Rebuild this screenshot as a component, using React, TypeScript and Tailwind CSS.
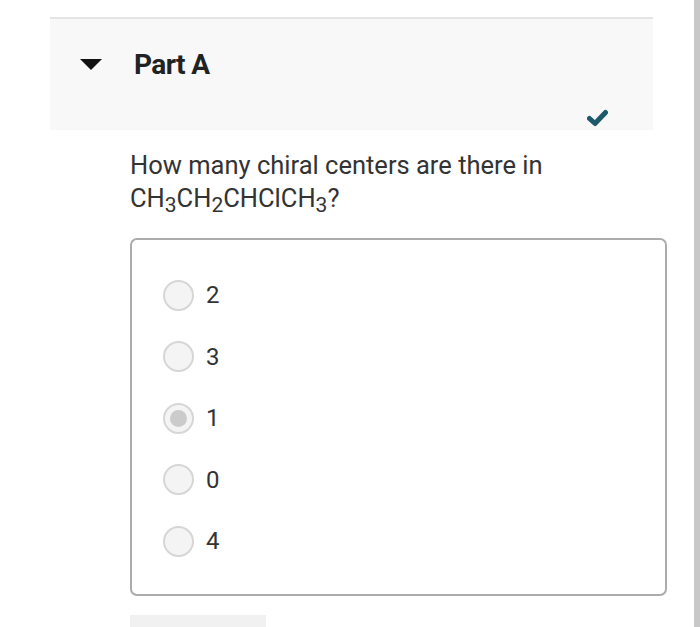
import React from "react";

const options = ["2", "3", "1", "0", "4"];
const selected = 2;

function Sub({ children }: { children: React.ReactNode }) {
  return <span className="text-[21px] relative top-[5px] leading-none">{children}</span>;
}

export default function App() {
  return (
    <div
      className="w-[700px] h-[627px] overflow-hidden bg-white flex"
      style={{ fontFamily: "Roboto, 'Liberation Sans', sans-serif" }}
    >
      <div className="flex-1 flex flex-col pt-[17px] pl-[50px]">
        <div className="shrink-0 w-[603px] h-[113px] border-t-2 border-[#e4e4e4] bg-[#f8f8f8] flex flex-col">
          <div className="flex items-center h-[60px] mt-[16px]">
            <svg width="22" height="12" viewBox="0 0 22 12" className="ml-[30px]">
              <polygon points="0,0 22,0 11,11" fill="#111" />
            </svg>
            <span className="ml-[32px] text-[28px] font-bold text-[#222] tracking-[-0.6px]">Part A</span>
          </div>
          <div className="flex justify-end pr-[45px] mt-[14px]">
            <svg width="21" height="18" viewBox="0 0 21 18">
              <path d="M2.5 9.5 L8 14.5 L18.5 3.5" fill="none" stroke="#1b5a6a" strokeWidth="5" strokeLinecap="round" strokeLinejoin="round" />
            </svg>
          </div>
        </div>
        <div className="shrink-0 ml-[80px] mt-[19px] text-[25.5px] leading-[33px] text-[#333]">
          <div>How many chiral centers are there in</div>
          <div>
            CH<Sub>3</Sub>CH<Sub>2</Sub>CHClCH<Sub>3</Sub>?
          </div>
        </div>
        <div className="shrink-0 ml-[80px] mt-[23px] w-[537px] h-[358px] border-2 border-[#acacac] rounded-[7px] flex flex-col pt-[39px] pl-[31px] gap-[29.5px]">
          {options.map((o, i) => (
            <div key={o} className="flex items-center h-[32px]">
              <div className="w-[31px] h-[31px] rounded-full border-2 border-[#d6d6d6] bg-[#f4f4f4] flex items-center justify-center">
                {i === selected && <div className="w-[17px] h-[17px] rounded-full bg-[#cbcbcb]" />}
              </div>
              <span className="ml-[12px] text-[24px] text-[#333]">{o}</span>
            </div>
          ))}
        </div>
        <div className="shrink-0 ml-[80px] mt-[19px] w-[136px] h-[20px] bg-[#f1f1f1]" />
      </div>
      <div className="w-[6px] h-full bg-[#c8c8c8]" />
    </div>
  );
}
